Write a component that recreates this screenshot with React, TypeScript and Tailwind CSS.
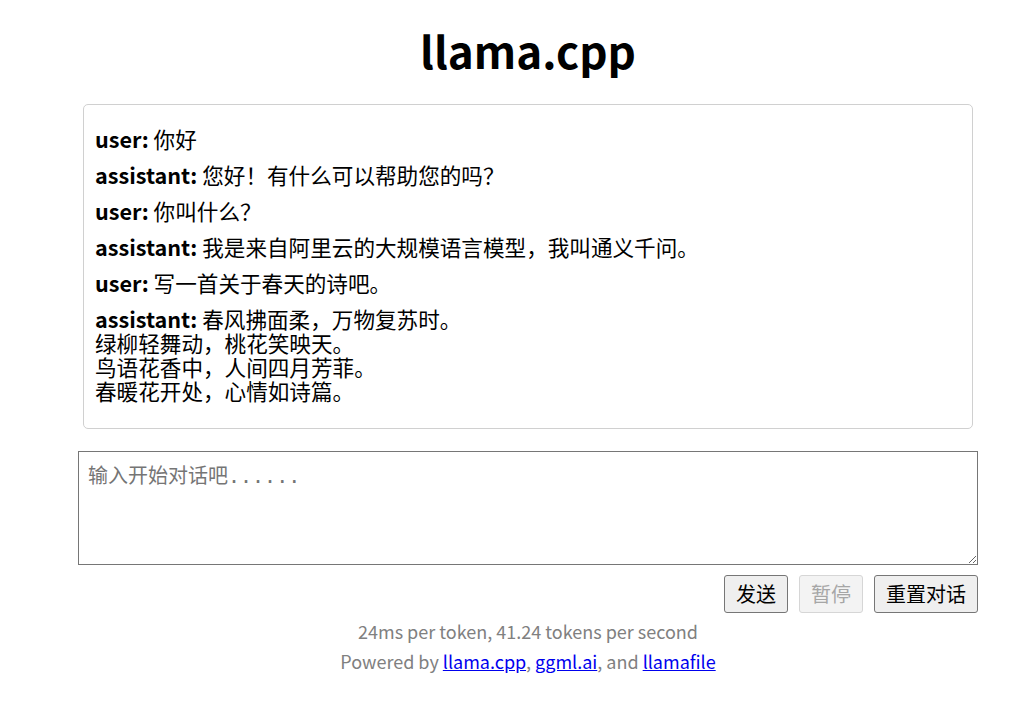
import React from "react";

const font = { fontFamily: '"Noto Sans CJK SC", "Noto Sans", sans-serif' };

type Msg = { role: string; text: string };

const messages: Msg[] = [
  { role: "user", text: "你好" },
  { role: "assistant", text: "您好！有什么可以帮助您的吗？" },
  { role: "user", text: "你叫什么？" },
  { role: "assistant", text: "我是来自阿里云的大规模语言模型，我叫通义千问。" },
  { role: "user", text: "写一首关于春天的诗吧。" },
  {
    role: "assistant",
    text: "春风拂面柔，万物复苏时。\n绿柳轻舞动，桃花笑映天。\n鸟语花香中，人间四月芳菲。\n春暖花开处，心情如诗篇。",
  },
];

export default function App() {
  return (
    <div className="min-h-screen bg-white text-black" style={font}>
      <div className="ml-[78px] flex w-[900px] flex-col">
        {/* 제목 */}
        <h1 className="pt-[21px] text-center text-[44px] font-bold leading-[58px]">llama.cpp</h1>

        {/* 대화 내용 */}
        <main className="mx-[5px] mt-[25px] flex flex-col gap-[12px] rounded-[5px] border border-[#d0d0d0] pl-[11px] pr-[12px] pt-[22px] pb-[25px]">
          {messages.map((m, i) => (
            <p key={i} className="whitespace-pre-wrap text-[21.6px] leading-[24px]">
              <span className="font-bold">{m.role}:</span> {m.text}
            </p>
          ))}
        </main>

        {/* 입력 */}
        <textarea
          className="mt-[22px] h-[114px] w-full resize-y rounded-none border border-[#767676] px-[9px] py-[12px] text-[20px] leading-[24px] placeholder:text-[#757575] focus:outline-none"
          style={{ fontFamily: '"DejaVu Sans Mono", "Noto Sans CJK SC", monospace' }}
          placeholder="输入开始对话吧......"
        />

        <div className="mt-[10px] flex justify-end gap-[11px]">
          <button className="h-[38px] rounded-[3px] border border-[#767676] bg-[#efefef] px-[11px] text-[20px] leading-[24px]">
            发送
          </button>
          <button
            disabled
            className="h-[38px] rounded-[3px] border border-[#d6d6d6] bg-[#f3f3f3] px-[11px] text-[20px] leading-[24px] text-[#a6a6a6]"
          >
            暂停
          </button>
          <button className="h-[38px] rounded-[3px] border border-[#767676] bg-[#efefef] px-[11px] text-[20px] leading-[24px]">
            重置对话
          </button>
        </div>

        {/* 하단 */}
        <div className="mt-[3px] flex flex-col items-center text-[18px] leading-[30px] text-[#808080]">
          <p>24ms per token, 41.24 tokens per second</p>
          <p>
            Powered by{" "}
            <a href="#" className="text-[#0000ee] underline">llama.cpp</a>,{" "}
            <a href="#" className="text-[#0000ee] underline">ggml.ai</a>, and{" "}
            <a href="#" className="text-[#0000ee] underline">llamafile</a>
          </p>
        </div>
      </div>
    </div>
  );
}
